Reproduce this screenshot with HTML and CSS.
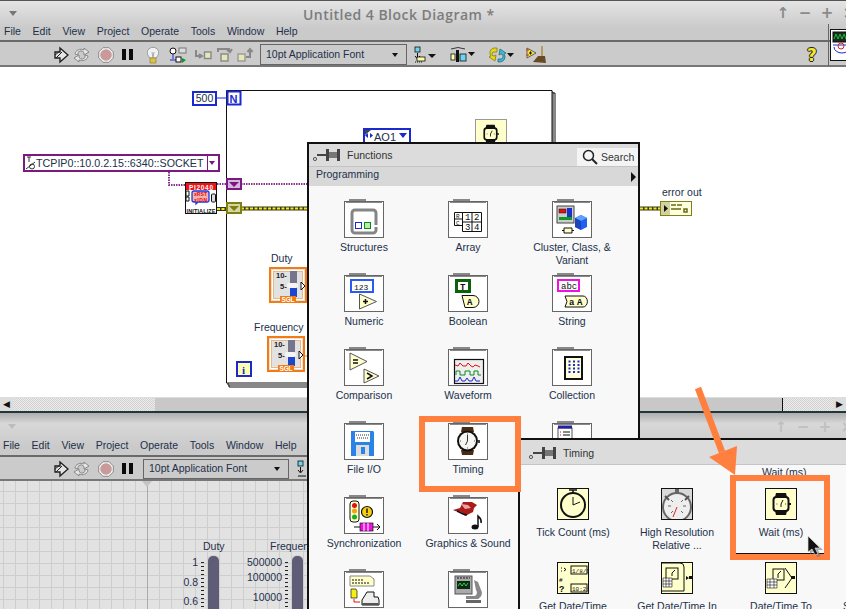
FILE: index.html
```html
<!DOCTYPE html>
<html lang="en">
<head>
  <meta charset="UTF-8">
  <meta name="viewport" content="width=device-width, initial-scale=1.0">
  <title>Untitled 4 Block Diagram</title>
  <link rel="stylesheet" href="styles.css">
</head>
<body>
  <!-- shared icons -->
  <svg class="defs" width="0" height="0">
    <symbol id="i-run" viewBox="0 0 15 18">
      <path d="M1 6h5V2l8 7-8 7v-4H1z" fill="#e4e4e4" stroke="#222" stroke-width="1.4"/>
      <path d="M1 9l5-4M2 12l6-6" stroke="#222"/>
    </symbol>
    <symbol id="i-cont" viewBox="0 0 17 16">
      <path d="M2 7a6 5 0 0 1 9-4V1l5 4-5 3V6a3 3 0 0 0-6 2zM15 9a6 5 0 0 1-9 4v2l-5-4 5-3v2a3 3 0 0 0 6-2z" fill="#e6e6e6" stroke="#888"/>
    </symbol>
    <symbol id="i-abort" viewBox="0 0 16 16">
      <path d="M5 .7h6L15.300 5v6L11 15.300H5L.7 11V5z" fill="#f2f2f2" stroke="#8a8a8a"/>
      <circle cx="8" cy="8" r="5.800" fill="#c99a9a"/>
    </symbol>
    <symbol id="i-pause" viewBox="0 0 11 11">
      <path d="M0 0h4v11H0zM7 0h4v11H7z" fill="#0a0a0a"/>
    </symbol>
    <symbol id="i-pin" viewBox="0 0 28 14">
      <circle cx="2" cy="11" r="1.600" fill="none" stroke="#555"/>
      <path d="M4 7h10" stroke="#444" stroke-width="2"/>
      <path d="M13 1h3v12h-3zM24 1h3v12h-3z" fill="#444"/>
      <path d="M16 4h8v6h-8z" fill="#777"/>
    </symbol>
    <symbol id="i-watch" viewBox="0 0 24 28">
      <path d="M6 0h11l1 5H5zM5 23h13l-1 5H6z" fill="#4a2c14"/>
      <circle cx="11.500" cy="14" r="10.500" fill="#111"/>
      <circle cx="11.500" cy="14" r="8.500" fill="#f6f6f2"/>
      <path d="M11.500 14V8M11.500 14l-2 4" stroke="#333"/>
      <path d="M11.500 6.500v1M11.500 20.500v1M4 14h1M18 14h1" stroke="#555"/>
      <rect x="22" y="13" width="2" height="3" fill="#444"/>
    </symbol>
    <symbol id="i-wait" viewBox="0 0 20 24">
      <path d="M5 1h10l1 4H4zM4 19h12l-1 4H5z" fill="#111"/>
      <rect x="2.500" y="5" width="15" height="14" rx="3" fill="#ffffcc" stroke="#111" stroke-width="2"/>
      <path d="M10 12l2-4M10 12v3M5.500 12h.8M14 12h.8" stroke="#111"/>
      <rect x="18" y="11" width="2" height="2" fill="#111"/>
    </symbol>
  </svg>

  <!-- block diagram window -->
  <section class="window block-window">
    <div class="chrome">
      <div class="titlebar">
        <span class="win-menu"></span>
        <span class="win-title">Untitled 4 Block Diagram *</span>
        <div class="win-buttons"><span>↑</span><span>−</span><span>+</span><span>×</span></div>
      </div>
      <nav class="menubar">
        <span>File</span><span>Edit</span><span>View</span><span>Project</span><span>Operate</span><span>Tools</span><span>Window</span><span>Help</span>
      </nav>
    </div>
    <div class="toolbar">
      <svg class="t-run" width="15" height="18"><use href="#i-run"/></svg>
      <svg class="t-cont" width="17" height="16"><use href="#i-cont"/></svg>
      <svg class="t-abort" width="16" height="16"><use href="#i-abort"/></svg>
      <svg class="t-pause" width="11" height="11"><use href="#i-pause"/></svg>
      <svg class="t-bulb" width="14" height="18" viewBox="0 0 14 18">
        <path d="M4 12C1 9 1 6 2 4a6 6 0 0 1 10 0c1 2 1 5-2 8z" fill="#f2f2f2" stroke="#999"/>
        <path d="M6 6l1 6M8 6l-1 6" stroke="#aaa"/>
        <rect x="4" y="12" width="6" height="5" fill="#d8c34a" stroke="#8a7a20" stroke-width=".6"/>
      </svg>
      <svg class="t-retain" width="18" height="18" viewBox="0 0 18 18">
        <circle cx="4" cy="5" r="3" fill="#fff" stroke="#111"/>
        <rect x="10" y="2" width="7" height="5" fill="#ddd" stroke="#777"/>
        <path d="M4 8v5M1 14h10" stroke="#1a2ad0"/>
        <rect x="7" y="11" width="5" height="5" fill="#fff" stroke="#111"/>
        <path d="M13 12l4 2-4 3z" fill="#0a9a20"/>
      </svg>
      <svg class="t-step" width="17" height="12" viewBox="0 0 17 12">
        <path d="M1 1v6h5M4 5l3 2-3 2" fill="none" stroke="#888" stroke-width="2"/>
        <rect x="9.500" y="3" width="6.500" height="6.500" fill="#e6e6b8" stroke="#888" stroke-width="1.400"/>
      </svg>
      <svg class="t-over" width="16" height="16" viewBox="0 0 16 16">
        <path d="M1 5V2h11v3M10 3l3 2 2-3" fill="none" stroke="#888" stroke-width="2"/>
        <rect x="4" y="7" width="7" height="7" fill="#e6e6b8" stroke="#888" stroke-width="1.400"/>
      </svg>
      <svg class="t-out" width="17" height="16" viewBox="0 0 17 16">
        <rect x="1" y="7" width="7" height="7" fill="#e6e6b8" stroke="#999" stroke-width="1.400"/>
        <path d="M9 10h4V3M10.500 5l2.500-3 2.500 3" fill="none" stroke="#888" stroke-width="2"/>
      </svg>
      <div class="font-select t-font"><span>10pt Application Font</span><i></i></div>
      <svg class="t-align" width="25" height="18" viewBox="0 0 25 18">
        <rect x="1" y="1" width="5" height="5" fill="#6fd3f0" stroke="#111" stroke-width=".8"/>
        <path d="M3.500 7v5M1 10l2.500 3L6 10" fill="none" stroke="#111"/>
        <path d="M1 16h8" stroke="#111" stroke-dasharray="1 1"/>
        <rect x="3" y="11" width="8" height="4" fill="#ffffa8" stroke="#111" stroke-width=".8"/>
        <path d="M14 8h8l-4 4z" fill="#111"/>
      </svg>
      <svg class="t-dist" width="25" height="18" viewBox="0 0 25 18">
        <path d="M1 3q7-3 14 0" fill="none" stroke="#111" stroke-width=".8"/>
        <rect x="1" y="8" width="4" height="6" fill="#ffffa8" stroke="#111" stroke-width=".8"/>
        <rect x="6" y="4" width="3" height="12" fill="#111"/>
        <rect x="10" y="8" width="6" height="7" fill="#6fd3f0" stroke="#111" stroke-width=".8"/>
        <path d="M18 6h7l-3.500 4z" fill="#111"/>
      </svg>
      <svg class="t-order" width="26" height="18" viewBox="0 0 26 18">
        <path d="M9 2H6a5 5 0 0 0-3 8l-2 1 6 4 1-6-2 1a2 2 0 0 1 0-4h3z" fill="#e7d616" stroke="#77700a" stroke-width=".7"/>
        <path d="M10 16h2a5 5 0 0 0 4-8l2-1-6-4-1 6 2-1a2 2 0 0 1-1 5h-2z" fill="#3fb7d0" stroke="#146478" stroke-width=".7"/>
        <path d="M19 7h7l-3.500 4z" fill="#111"/>
      </svg>
      <svg class="t-clean" width="20" height="18" viewBox="0 0 20 18">
        <path d="M1 2l9 5-9 5z" fill="#f4e13a" stroke="#444" stroke-width=".8"/>
        <path d="M0 4h3M0 9h3" stroke="#d22"/>
        <path d="M3 7h3M4.500 5.500v3" stroke="#111"/>
        <path d="M15 0h2v10h-2z" fill="#b59a62"/>
        <path d="M7 16l5-6h7l1 7z" fill="#6a4a24"/>
      </svg>
      <span class="help">?</span>
    </div>
    <svg class="corner-icon" width="16" height="32" viewBox="0 0 16 32">
      <rect x=".5" y=".5" width="30" height="31" fill="#fff" stroke="#111"/>
      <rect x="3" y="3" width="17" height="10" fill="#1d2a1f" stroke="#111"/>
      <path d="M4 10l2-5 2 5 2-5 2 5 2-5 2 5" fill="none" stroke="#18c030"/>
      <path d="M3 16h14" stroke="#1a2ad0"/>
      <circle cx="11" cy="17" r="3" fill="none" stroke="#d22"/>
      <path d="M4 18a8 6 0 0 0 16 0" fill="none" stroke="#1a2ad0"/>
    </svg>

    <div class="diagram">
      <svg class="wires" width="846" height="330" viewBox="0 67 846 330">
        <!-- stacked loop frame -->
        <path d="M229 93H555V387H229z" fill="#fff" stroke="#111"/>
        <path d="M228 92H553V385H228z" fill="#fff" stroke="#111"/>
        <path d="M226.500 90.500H552V383H226.500z" fill="#fff" stroke="#111"/>
        <path d="M217 98h10" stroke="#1a2ad0"/>
        <!-- wires -->
        <path d="M169 172v13h16M217 184h9M241 184h66" fill="none" stroke="#8a3090" stroke-width="2" stroke-dasharray="1.500 1"/>
        <path d="M217 209h9M241 208.500h66M640 208.500h20" stroke="#3a3a10" stroke-width="4"/>
        <path d="M217 209h9M241 208.500h66M640 208.500h20" stroke="#f5e62a" stroke-width="2" stroke-dasharray="3 1.500"/>
        <path d="M305 356h4" stroke="#f47a12"/>
        <!-- N terminal -->
        <rect x="227.500" y="91.500" width="13" height="13" fill="#fff" stroke="#1a2ad0" stroke-width="2"/>
        <text x="229.500" y="102.500" class="term-n">N</text>
        <!-- shift registers -->
        <rect x="227" y="179" width="14" height="10" fill="#d8b8dc" stroke="#7a1a80" stroke-width="2"/>
        <path d="M229 182h10l-5 5z" fill="#7a1a80"/>
        <rect x="227" y="203" width="14" height="10" fill="#d6d6a0" stroke="#7f7f12" stroke-width="2"/>
        <path d="M229 206h10l-5 5z" fill="#7f7f12"/>
        <!-- VISA init -->
        <rect x="185.500" y="182.500" width="31" height="31" fill="#fff" stroke="#111"/>
        <rect x="186" y="183" width="30" height="7" fill="#ee1212"/>
        <text x="189" y="189.500" class="ic-white" textLength="24">PI2040</text>
        <path d="M194 191h13a2 2 0 0 1 2 2v7a2 2 0 0 1-2 2h-9l-2 2v-2h-2a2 2 0 0 1-2-2v-7a2 2 0 0 1 2-2z" fill="#f4b0b0" stroke="#1a3ae0" stroke-width="1.300"/>
        <text x="194" y="196.200" class="ic-tiny" textLength="13">xRST</text>
        <text x="194" y="201.500" class="ic-tiny" textLength="13">xIDN</text>
        <path d="M186 191h3v5h-3zM186 197h3v4h-3z" fill="#fff" stroke="#111"/>
        <rect x="211.500" y="194" width="4" height="8" rx="1" fill="#ddd" stroke="#111"/>
        <text x="186.500" y="212.500" class="ic-init" textLength="29">INITIALIZE</text>
        <!-- wait -->
        <rect x="475.500" y="119.500" width="31" height="30" fill="#ffffcc" stroke="#999"/>
        <svg x="482" y="124" width="17" height="20"><use href="#i-wait"/></svg>
        <!-- controls -->
        <g class="slider" transform="translate(269 267)">
          <rect x="1" y="1" width="36" height="34" fill="#e2e2e2" stroke="#f47a12" stroke-width="2"/>
          <rect x="3.500" y="3.500" width="31" height="29" fill="none" stroke="#fff"/>
          <rect x="4.500" y="4.500" width="29" height="27" fill="none" stroke="#f9a860" stroke-width=".8"/>
          <text x="7" y="10.500" class="ic-dial">10-</text>
          <text x="11" y="21.500" class="ic-dial">5-</text>
          <rect x="21" y="4" width="7" height="26" fill="#77758e"/>
          <rect x="21" y="20" width="7" height="10" fill="#1d46cf"/>
          <rect x="18" y="16" width="11" height="5" rx="2" fill="#f4f4f4"/>
          <path d="M32 15l4 4-4 4z" fill="#fff" stroke="#111"/>
          <rect x="11" y="29" width="16" height="7" fill="#f47a12"/>
          <text x="12.500" y="35" class="ic-sgl" textLength="13">SGL</text>
        </g>
        <g class="slider" transform="translate(267 336)">
          <rect x="1" y="1" width="36" height="34" fill="#e2e2e2" stroke="#f47a12" stroke-width="2"/>
          <rect x="3.500" y="3.500" width="31" height="29" fill="none" stroke="#fff"/>
          <rect x="4.500" y="4.500" width="29" height="27" fill="none" stroke="#f9a860" stroke-width=".8"/>
          <text x="7" y="10.500" class="ic-dial">10-</text>
          <text x="11" y="21.500" class="ic-dial">5-</text>
          <rect x="21" y="4" width="7" height="26" fill="#77758e"/>
          <rect x="21" y="20" width="7" height="10" fill="#1d46cf"/>
          <rect x="18" y="16" width="11" height="5" rx="2" fill="#f4f4f4"/>
          <path d="M32 15l4 4-4 4z" fill="#fff" stroke="#111"/>
          <rect x="11" y="29" width="16" height="7" fill="#f47a12"/>
          <text x="12.500" y="35" class="ic-sgl" textLength="13">SGL</text>
        </g>
        <rect x="237" y="362" width="14" height="14" fill="#ffffb0" stroke="#1a2ad0" stroke-width="2"/>
        <text x="242" y="373.500" class="term-i">i</text>
        <!-- error out -->
        <rect x="660.500" y="201.500" width="31" height="14" fill="#fdfde0" stroke="#7f7f12"/>
        <rect x="661" y="202" width="9" height="13" fill="#d2d2a0"/>
        <path d="M664 205l4 3.500-4 3.500z" fill="#111"/>
        <path d="M671 205h5M677 205h5M671 209h10M684 209h3v3h-3z" stroke="#6b6b10" stroke-width="1.500" fill="none"/>
      </svg>
      <span class="num-const">500</span>
      <div class="visa-ctl">
        <svg width="11" height="14" viewBox="0 0 11 14"><path d="M2 1h4M4 1v5M1 13l9-7" stroke="#333" fill="none"/><circle cx="7" cy="10.500" r="2.500" fill="none" stroke="#333"/></svg>
        <span>TCPIP0::10.0.2.15::6340::SOCKET</span>
        <i></i>
      </div>
      <div class="ao-ctl">
        <svg class="ao-arrows" width="8" height="14" viewBox="0 0 8 14"><path d="M0 0h6L0 5z" fill="#444"/><path d="M3 8L0 5.500 3 3zM5 3l3 2.500L5 8z" fill="#1a2ad0"/></svg>
        <span>AO1</span><i></i>
      </div>
      <span class="lbl lbl-duty">Duty</span>
      <span class="lbl lbl-freq">Frequency</span>
      <span class="lbl lbl-err">error out</span>
    </div>

    <div class="hscroll">
      <span class="sb-btn">◀</span>
      <span class="sb-track sb-left"></span>
      <span class="sb-thumb"></span>
      <span class="sb-track sb-right"></span>
      <span class="sb-btn">▶</span>
    </div>
  </section>

  <!-- front panel window -->
  <section class="window front-window">
    <div class="chrome">
      <div class="titlebar titlebar-off">
        <span class="win-menu win-menu-off"></span>
        <div class="win-buttons"><span>↑</span><span>−</span><span>+</span><span>×</span></div>
      </div>
      <nav class="menubar">
        <span>File</span><span>Edit</span><span>View</span><span>Project</span><span>Operate</span><span>Tools</span><span>Window</span><span>Help</span>
      </nav>
    </div>
    <div class="toolbar">
      <svg class="t-run" width="15" height="18"><use href="#i-run"/></svg>
      <svg class="t-cont" width="17" height="16"><use href="#i-cont"/></svg>
      <svg class="t-abort" width="16" height="16"><use href="#i-abort"/></svg>
      <svg class="t-pause" width="11" height="11"><use href="#i-pause"/></svg>
      <div class="font-select t-font-front"><span>10pt Application Font</span><i></i></div>
      <svg class="t-align-front" width="12" height="18" viewBox="0 0 12 18">
        <rect x="1" y="1" width="5" height="5" fill="#6fd3f0" stroke="#111" stroke-width=".8"/>
        <path d="M3.500 7v5M1 10l2.500 3L6 10M1 16h8" fill="none" stroke="#111"/>
      </svg>
    </div>
    <div class="panel">
      <span class="panel-guide"></span>
      <span class="plbl plbl-duty">Duty</span>
      <span class="plbl plbl-freq">Frequency</span>
      <span class="track track-duty"></span>
      <span class="track track-freq"></span>
      <span class="scale s-1">1</span>
      <span class="scale s-08">0.8</span>
      <span class="scale s-06">0.6</span>
      <span class="scale f-1">500000</span>
      <span class="scale f-2">100000</span>
      <span class="scale f-3">10000</span>
      <span class="ticks ticks-duty"></span>
      <span class="ticks ticks-freq"></span>
    </div>
  </section>

  <!-- functions palette -->
  <section class="palette functions">
    <header class="pal-head">
      <svg width="28" height="14"><use href="#i-pin"/></svg>
      <span class="pal-name">Functions</span>
      <div class="pal-search">
        <svg width="16" height="16" viewBox="0 0 16 16"><circle cx="6.500" cy="6.500" r="5" fill="none" stroke="#222" stroke-width="1.500"/><path d="M10 10l5 5" stroke="#222" stroke-width="2"/></svg>
        <span>Search</span>
      </div>
    </header>
    <div class="pal-sub"><span>Programming</span><i></i></div>
    <div class="pal-grid">
      <div class="cell"><div class="tile">
        <svg width="38" height="35" viewBox="0 0 38 35"><path d="M31 25v3a3 3 0 0 1-3 3H10a3 3 0 0 1-3-3V11a3 3 0 0 1 3-3h18a3 3 0 0 1 3 3v12" fill="none" stroke="#858585" stroke-width="3"/><rect x="10.500" y="20.500" width="6" height="6" fill="#fff" stroke="#1a2ad0"/><rect x="19.500" y="20.500" width="6" height="6" fill="#b6f0a0" stroke="#0a8a20"/></svg>
      </div><span>Structures</span></div>
      <div class="cell"><div class="tile">
        <svg width="38" height="35" viewBox="0 0 38 35"><path d="M5.500 10.500h8v13h-8zM5.500 17h8M13.500 10.500h19v19h-19zM13.500 20h19M23 10.500v19" fill="#fff" stroke="#111"/><text x="7" y="16" class="ic-text">R</text><text x="7" y="22.500" class="ic-text">C</text><text x="16" y="18" class="ic-num">1</text><text x="25" y="18" class="ic-num">2</text><text x="16" y="28" class="ic-num">3</text><text x="25" y="28" class="ic-num">4</text></svg>
      </div><span>Array</span></div>
      <div class="cell"><div class="tile">
        <svg width="38" height="35" viewBox="0 0 38 35"><rect x="4" y="4" width="17" height="17" fill="#ccc" stroke="#444"/><rect x="6" y="7" width="7" height="4" fill="#e01010" stroke="#111" stroke-width=".5"/><rect x="14" y="6" width="5" height="9" fill="#1830d0"/><rect x="6" y="15" width="13" height="3" fill="#0a9a20"/><path d="M22 16l6-3 6 3v9l-6 3-6-3z" fill="#2060f0"/><path d="M22 16l6 3 6-3-6-3z" fill="#60a0ff"/><path d="M28 19v9l-6-3v-9z" fill="#1a46b8"/><path d="M11 26h8v5h-8z" fill="#ffffcc" stroke="#111"/><path d="M9 28.500h2M19 28.500h2" stroke="#111"/></svg>
      </div><span>Cluster, Class, &amp;<br>Variant</span></div>

      <div class="cell"><div class="tile">
        <svg width="38" height="35" viewBox="0 0 38 35"><rect x="6" y="4" width="22" height="12" fill="#fff" stroke="#2a5af0" stroke-width="2"/><text x="9" y="13.500" class="ic-num ic-mono">123</text><path d="M14.500 18l17 7.500-17 7.500z" fill="#ffffcc" stroke="#555"/><path d="M18 25.500h5M20.500 23v5" stroke="#111" stroke-width="1.500"/></svg>
      </div><span>Numeric</span></div>
      <div class="cell"><div class="tile">
        <svg width="38" height="35" viewBox="0 0 38 35"><rect x="6" y="3" width="16" height="14" fill="#0a620a"/><rect x="9" y="6" width="10" height="8" fill="#fff"/><text x="11" y="13.500" class="ic-num ic-bold">T</text><path d="M13 19.500h11a6 6 0 0 1 0 12H16z" fill="#ffffcc" stroke="#111"/><text x="18" y="29" class="ic-num ic-bold">A</text></svg>
      </div><span>Boolean</span></div>
      <div class="cell"><div class="tile">
        <svg width="38" height="35" viewBox="0 0 38 35"><rect x="5" y="4" width="21" height="11" fill="#fff" stroke="#f010e0" stroke-width="2"/><text x="8" y="13" class="ic-num">abc</text><path d="M12 20h18a4 5 0 0 1 0 11H12l2-5.500z" fill="#ffffcc" stroke="#111"/><text x="16" y="29" class="ic-num ic-bold">a</text><text x="24" y="29" class="ic-num ic-bold">A</text></svg>
      </div><span>String</span></div>

      <div class="cell"><div class="tile">
        <svg width="38" height="35" viewBox="0 0 38 35"><path d="M5 3l17 8.500L5 20z" fill="#ffffcc" stroke="#555"/><path d="M8 10h5M8 13h5" stroke="#111" stroke-width="1.500"/><path d="M19 19l15 7-15 7z" fill="#ffffcc" stroke="#555"/><path d="M22 23l5 3-5 3" fill="none" stroke="#111" stroke-width="1.500"/></svg>
      </div><span>Comparison</span></div>
      <div class="cell"><div class="tile">
        <svg width="38" height="35" viewBox="0 0 38 35"><rect x="5.500" y="9.500" width="29" height="24" fill="#eee" stroke="#111" stroke-width="1.200"/><path d="M6 15l3 1 2-3 3 3 3 0 2-3 3 3 2 1 2-2 3 1 2 1" fill="none" stroke="#e01010"/><path d="M7 25v-4h4v4h5v-4h5v4h4v-4h4v4h3" fill="none" stroke="#0a8a20"/><path d="M6 31h3l2-4 2 4h3l2-3 2 3h3l2-4 2 4h4" fill="none" stroke="#1a2ad0"/></svg>
      </div><span>Waveform</span></div>
      <div class="cell"><div class="tile">
        <svg width="38" height="35" viewBox="0 0 38 35"><rect x="12" y="7" width="17" height="22" fill="#ffffdc" stroke="#111" stroke-width="2"/><path d="M15.500 11.500h11M15.500 15h11M15.500 18.500h11M15.500 22h11" stroke="#1a2ad0" stroke-width="2" stroke-dasharray="2 2.500"/></svg>
      </div><span>Collection</span></div>

      <div class="cell"><div class="tile">
        <svg width="38" height="35" viewBox="0 0 38 35"><path d="M6 7h22l1 1v24H6z" fill="#2a84e8"/><rect x="10" y="8" width="15" height="10" fill="#fff"/><path d="M11 11h13M12 14h11" stroke="#333" stroke-dasharray="1 1"/><rect x="11" y="21" width="13" height="11" fill="#ddd"/><rect x="16" y="23" width="4" height="7" fill="#2a84e8"/></svg>
      </div><span>File I/O</span></div>
      <div class="cell"><div class="tile">
        <svg class="ic-timing" width="24" height="28"><use href="#i-watch"/></svg>
      </div><span>Timing</span></div>
      <div class="cell"><div class="tile">
        <svg width="38" height="35" viewBox="0 0 38 35"><rect x="5" y="4" width="14" height="13" fill="#fff" stroke="#555"/><rect x="5" y="1.500" width="14" height="3" fill="#2020a0"/><path d="M7 8h1M7 11h1" stroke="#e01010"/><path d="M10 8h7M10 11h7" stroke="#111"/></svg>
      </div></div>

      <div class="cell"><div class="tile">
        <svg width="38" height="35" viewBox="0 0 38 35"><rect x="5" y="3" width="9" height="21" rx="3" fill="#ffffcc" stroke="#111"/><circle cx="9.500" cy="7.500" r="2.500" fill="#e01010"/><circle cx="9.500" cy="13" r="2.500" fill="#f5a010"/><circle cx="9.500" cy="19" r="2.500" fill="#18b018"/><circle cx="22" cy="14" r="5.500" fill="#f5d010" stroke="#111" stroke-width="1.200"/><path d="M22 10.500v4.500M22 16v1.500" stroke="#111" stroke-width="1.400"/><path d="M9 29h6M28 29h6M32 26l3 3-3 3" fill="none" stroke="#111"/><rect x="15" y="25" width="13" height="8" fill="#f010e0" stroke="#111" stroke-width=".7"/><path d="M19 25v8M23 25v8" stroke="#fff"/></svg>
      </div><span>Synchronization</span></div>
      <div class="cell"><div class="tile">
        <svg width="38" height="35" viewBox="0 0 38 35"><path d="M4 12l7-2 3-6 9 0 5 3-3 3-1 4-4 2-4 2-4-4-6-1z" fill="#a81c1c"/><path d="M12 6l7 1 3 3-6 1z" fill="#f0a0a0"/><path d="M8 13l6 3 4 1" stroke="#111" fill="none" stroke-width="1.500"/><ellipse cx="26" cy="29" rx="3.500" ry="2.500" fill="#111"/><path d="M29 29V18c2 2 4 3 3 7" fill="none" stroke="#111" stroke-width="1.500"/></svg>
      </div><span>Graphics &amp; Sound</span></div>
      <div class="cell"></div>

      <div class="cell"><div class="tile">
        <svg width="38" height="35" viewBox="0 0 38 35"><path d="M5 4h20l4 3v7H5z" fill="#ffffcc" stroke="#888"/><path d="M7 8h12M7 11h18" stroke="#111" stroke-dasharray="2 1"/><path d="M6 17h5l1 2v7H6z" fill="#f5f010" stroke="#111" stroke-width=".7"/><path d="M9 27v3h6" fill="none" stroke="#e01010"/><path d="M22 20h7v5h4l1 3v5H17v-5z" fill="#eee" stroke="#111"/><path d="M17 33h17l-1-2H17z" fill="#555"/></svg>
      </div></div>
      <div class="cell"><div class="tile">
        <svg width="38" height="35" viewBox="0 0 38 35"><rect x="6" y="4" width="17" height="18" fill="#aaa" stroke="#555"/><path d="M8 6h13" stroke="#111" stroke-dasharray="2 1"/><rect x="8" y="9" width="13" height="8" fill="#0c2a14"/><path d="M9 14l2-3 2 3 2-3 2 3 2-3" fill="none" stroke="#30d040"/><path d="M25 8l4 2 3 8a6 6 0 0 1-6 9H17v-3h9a4 4 0 0 0 1-6z" fill="#888"/><path d="M17 28h15v3H17z" fill="#666"/></svg>
      </div></div>
    </div>
  </section>

  <!-- timing sub palette -->
  <section class="palette timing">
    <header class="pal-head pal-head-t">
      <svg width="28" height="14"><use href="#i-pin"/></svg>
      <span class="pal-name">Timing</span>
    </header>
    <div class="t-grid">
      <div class="cell"><div class="vi">
        <svg width="30" height="30" viewBox="0 0 30 30"><path d="M11 1h8M15 1v4" stroke="#111" stroke-width="1.500"/><circle cx="15" cy="16" r="12" fill="#ffffcc" stroke="#111" stroke-width="2"/><path d="M15 16V8M15 16l7-3" stroke="#111"/></svg>
      </div><span>Tick Count (ms)</span></div>
      <div class="cell"><div class="vi vi-grey">
        <svg width="30" height="30" viewBox="0 0 30 30"><path d="M13 0h4v5h-4z" fill="#666"/><circle cx="15" cy="18" r="14" fill="#eee" stroke="#666" stroke-width="2"/><path d="M3 7l4 4M27 7l-4 4" stroke="#555" stroke-width="2"/><path d="M15 18l-4 10" stroke="#d22"/><path d="M6 17h3M21 17h3M9 11l2 2M21 11l-2 2M9 24l2-2M21 24l-2-2" stroke="#666"/></svg>
      </div><span>High Resolution<br>Relative ...</span></div>
      <div class="cell"><div class="vi">
        <svg width="20" height="24" viewBox="0 0 20 24"><use href="#i-wait"/></svg>
      </div><span>Wait (ms)</span></div>
      <div class="cell"></div>

      <div class="cell"><div class="vi">
        <svg width="30" height="30" viewBox="0 0 30 30"><rect x="13" y="3" width="16" height="8" fill="#ffffcc" stroke="#111"/><text x="14" y="10" class="ic-text">1/8/9</text><rect x="13" y="21" width="16" height="8" fill="#ffffcc" stroke="#111"/><text x="14" y="28" class="ic-text">10:21</text><text x="1" y="19" class="ic-text ic-b">#</text><text x="1" y="29" class="ic-num ic-bold">?</text><path d="M3 5h1M3 8h1M6 5l2 1.500-2 1.500" stroke="#111" fill="none"/></svg>
      </div><span>Get Date/Time</span></div>
      <div class="cell"><div class="vi">
        <svg width="30" height="30" viewBox="0 0 30 30"><path d="M0 0h18a4 4 0 0 1 4 4v24H0" fill="#ffffcc" stroke="#111"/><rect x="4" y="5" width="12" height="11" fill="#ffffcc" stroke="#111"/><path d="M10 10l3-3M10 10v3" stroke="#111"/><path d="M1 15h9v9H1zM1 18h9M1 21h9M4 15v9M7 15v9" fill="#fff" stroke="#111" stroke-width=".6"/><path d="M24 13l3 2-3 2z" fill="#111"/><rect x="27" y="13" width="3" height="3" fill="#111"/></svg>
      </div><span>Get Date/Time In</span></div>
      <div class="cell"><div class="vi">
        <svg width="30" height="30" viewBox="0 0 30 30"><rect x="7" y="6" width="11" height="11" fill="#ffffcc" stroke="#111"/><path d="M12 11l3-3M12 11v4" stroke="#111"/><path d="M1 16h10v9H1zM1 19h10M1 22h10M4 16v9M8 16v9" fill="#fff" stroke="#111" stroke-width=".6"/><path d="M19 5l7 10-7 10" fill="none" stroke="#111"/><rect x="25" y="13" width="4" height="3" fill="#111"/></svg>
      </div><span>Date/Time To</span></div>
      <div class="cell cell-off"><span>S</span></div>
    </div>
    <span class="tip">Wait (ms)</span>
  </section>

  <!-- annotations -->
  <span class="mark mark-timing"></span>
  <span class="mark mark-wait"></span>
  <span class="wait-line"></span>
  <svg class="arrow" width="60" height="100" viewBox="690 380 60 100">
    <path d="M698 388l24 64" stroke="#ff7f3f" stroke-width="6.500"/>
    <path d="M737 446l-28 11 26 18z" fill="#ff7f3f"/>
  </svg>
  <svg class="cursor" width="16" height="22" viewBox="0 0 16 22">
    <path d="M2 2l1 17 4-3 3 6 4-1-3-6h5z" fill="#777" opacity=".6"/>
    <path d="M1 1v16l4-3 3 6 3-1-3-6h5z" fill="#111" stroke="#ddd" stroke-width=".7"/>
  </svg>
</body>
</html>
```

FILE: styles.css
```css
* {
  box-sizing: border-box;
}

body {
  margin: 0;
  width: 846px;
  height: 609px;
  position: relative;
  overflow: hidden;
  background: #333;
  font-family: "Liberation Sans", Arial, sans-serif;
  font-size: 10.5px;
  color: #22304a;
}

.defs {
  position: absolute;
}

.window {
  position: absolute;
  left: 0;
  width: 846px;
  display: flex;
  flex-direction: column;
  overflow: hidden;
}

.block-window {
  top: 0;
  height: 413px;
  border-bottom: 2px solid #20383c;
}

.front-window {
  top: 413px;
  height: 196px;
}

.chrome {
  background: linear-gradient(#e4e4e4, #cacaca 70%);
  border-bottom: 2px solid #6a6a6a;
  flex-shrink: 0;
}

.block-window .chrome {
  height: 42px;
  border-top: 1px solid #555;
}

.front-window .chrome {
  height: 44px;
  background: linear-gradient(#aeaeae, #d8d8d8 25%, #cacaca 80%);
}

.titlebar {
  height: 24px;
  display: flex;
  align-items: center;
  position: relative;
}

.titlebar-off {
  height: 27px;
}

.win-menu {
  width: 0;
  height: 0;
  margin-left: 9px;
  border-left: 4px solid transparent;
  border-right: 4px solid transparent;
  border-top: 5px solid #777;
}

.win-menu-off {
  margin-left: 8px;
  border-top-color: #bcbcbc;
}

.win-title {
  margin: 2px 0 0 286px;
  font-family: "Open Sans", sans-serif;
  font-weight: 600;
  font-size: 14px;
  letter-spacing: 0.47px;
  white-space: nowrap;
  color: #7c7c7c;
}

.win-buttons {
  position: absolute;
  left: 772px;
  top: 3px;
  display: flex;
  font-family: "DejaVu Sans", sans-serif;
  font-size: 15px;
  font-weight: bold;
  color: #8a8a8a;
}

.win-buttons span {
  width: 22px;
  text-align: center;
}

.titlebar-off .win-buttons {
  left: 770px;
  top: 5px;
  color: #c0c0c0;
}

.menubar {
  height: 15px;
  display: flex;
  align-items: center;
  gap: 11.7px;
  padding: 0 0 3px 4px;
}

.front-window .menubar {
  padding: 0 0 5px 3px;
}

.toolbar {
  height: 25px;
  display: flex;
  align-items: center;
  background: #cbcbcb;
  border-bottom: 2px solid #777;
  padding: 2px 0 0 54px;
  flex-shrink: 0;
}

.front-window .toolbar {
  height: 24px;
  padding-top: 1px;
}

.t-cont { margin-left: 4px; }
.t-abort { margin-left: 8px; }
.t-pause { margin-left: 8px; }
.t-bulb { margin-left: 13px; }
.t-retain { margin-left: 9px; }
.t-step { margin-left: 8px; }
.t-over { margin-left: 5px; }
.t-out { margin-left: 4px; }
.t-font { margin-left: 6px; width: 147px; }
.t-align { margin-left: 7px; }
.t-dist { margin-left: 11px; }
.t-order { margin-left: 13px; }
.t-clean { margin-left: 12px; }
.t-font-front { margin-left: 10px; width: 146px; }
.t-align-front { margin-left: 8px; }

.font-select {
  height: 21px;
  border: 1px solid #666;
  display: flex;
  align-items: center;
  justify-content: space-between;
  padding: 0 8px 2px 5px;
}

.front-window .font-select {
  height: 20px;
}

.font-select i {
  width: 0;
  height: 0;
  margin-top: 3px;
  border-left: 3.5px solid transparent;
  border-right: 3.5px solid transparent;
  border-top: 4px solid #111;
}

.help {
  margin-left: 261px;
  font-family: "DejaVu Sans", sans-serif;
  font-size: 17px;
  font-weight: bold;
  color: #f4e82a;
  text-shadow: 1px 0 #222, -1px 0 #222, 0 1px #222, 0 -1px #222;
}

.corner-icon {
  position: absolute;
  left: 830px;
  top: 29px;
}

.block-window::after {
  content: "";
  position: absolute;
  left: 828px;
  top: 24px;
  width: 1px;
  height: 42px;
  background: #666;
}

/* diagram canvas */
.diagram {
  position: relative;
  flex: 1;
  background: #fff;
  overflow: hidden;
}

.wires {
  position: absolute;
  left: 0;
  top: 0;
}

.num-const {
  position: absolute;
  left: 192px;
  top: 24px;
  width: 25px;
  height: 15px;
  border: 2px solid #1a2ad0;
  background: #fff;
  line-height: 11px;
  text-align: center;
}

.visa-ctl {
  position: absolute;
  left: 23px;
  top: 87px;
  width: 197px;
  height: 18px;
  border: 2px solid #7a1a80;
  background: #fff;
  display: flex;
  align-items: center;
  font-size: 10.7px;
  white-space: nowrap;
}

.visa-ctl i {
  position: absolute;
  right: 0;
  top: 0;
  width: 11px;
  height: 14px;
  background: #fff;
  border-left: 1px solid #7a1a80;
}

.visa-ctl i::after {
  content: "";
  position: absolute;
  left: 1px;
  top: 5px;
  border-left: 3.5px solid transparent;
  border-right: 3.5px solid transparent;
  border-top: 4px solid #7a1a80;
}

.ao-ctl {
  position: absolute;
  left: 363px;
  top: 61px;
  width: 48px;
  height: 16px;
  border: 2px solid #1a2ad0;
  border-bottom: 0;
  background: #fff;
  display: flex;
  align-items: center;
  padding-left: 9px;
  font-size: 11px;
}

.ao-ctl i {
  position: absolute;
  right: 2px;
  top: 3px;
  border-left: 4px solid transparent;
  border-right: 4px solid transparent;
  border-top: 5px solid #1a2ad0;
}

.ao-arrows {
  position: absolute;
  left: 0;
  top: 0;
}

.lbl {
  position: absolute;
  white-space: nowrap;
}

.lbl-duty { left: 271px; top: 185px; }
.lbl-freq { left: 254px; top: 254px; }
.lbl-err { left: 662px; top: 119px; }

.hscroll {
  height: 14px;
  display: flex;
  background: #c8c8c8;
  border-top: 1px solid #ddd;
  flex-shrink: 0;
}

.sb-btn {
  width: 13px;
  font-size: 9px;
  line-height: 13px;
  text-align: center;
  color: #111;
  background: #ddd;
}

.sb-track {
  background: repeating-conic-gradient(#cfcfcf 0 25%, #eee 0 50%) 0 0 / 2px 2px;
}

.sb-left { width: 142px; }
.sb-right { width: 51px; border-left: 1px solid #111; }
.sb-thumb { flex: 1; }

/* front panel */
.panel {
  position: relative;
  flex: 1;
  background-color: #e2e2e2;
  background-image:
    linear-gradient(#cdcdcd 1px, transparent 1px),
    linear-gradient(90deg, #cdcdcd 1px, transparent 1px);
  background-size: 12px 12px;
  background-position: 3px 10px;
}

.panel-guide {
  position: absolute;
  left: 147px;
  top: 0;
  bottom: 0;
  width: 1px;
  background: #aaa;
}

.panel-guide::before {
  content: "";
  position: absolute;
  left: -5px;
  top: 0;
  border-left: 5px solid transparent;
  border-right: 5px solid transparent;
  border-top: 6px solid #c4c4c4;
}

.plbl,
.scale {
  position: absolute;
  white-space: nowrap;
  font-size: 10.5px;
}

.plbl-duty { left: 203px; top: 59px; }
.plbl-freq { left: 270px; top: 59px; }

.track {
  position: absolute;
  top: 75px;
  bottom: -10px;
  width: 11px;
  border-radius: 5px 5px 0 0;
  background: #5e5c76;
  box-shadow: 0 0 1px 1px #cfcfcf;
}

.track-duty { left: 208px; }
.track-freq { left: 292px; }

.scale { text-align: right; }
.s-1 { right: 648px; top: 75px; }
.s-08 { right: 648px; top: 95px; }
.s-06 { right: 648px; top: 114px; }
.f-1 { right: 564px; top: 75px; }
.f-2 { right: 564px; top: 90px; }
.f-3 { right: 564px; top: 110px; }

.ticks {
  position: absolute;
  top: 81px;
  bottom: 0;
  width: 3px;
  background: repeating-linear-gradient(#222 0 1px, transparent 1px 4px);
}

.ticks-duty { left: 201px; }
.ticks-freq { left: 285px; }

/* palettes */
.palette {
  position: absolute;
  background: #f8f8f8;
  border: 2px solid #111;
  overflow: hidden;
}

.functions {
  left: 307px;
  top: 142px;
  width: 333px;
  height: 480px;
}

.timing {
  left: 518px;
  top: 438px;
  width: 340px;
  height: 190px;
}

.pal-head {
  height: 23px;
  display: flex;
  align-items: center;
  gap: 6px;
  padding-left: 4px;
  background: #dcdcdc;
  border-bottom: 1px solid #c4c4c4;
  position: relative;
}

.pal-head-t {
  height: 25px;
  padding: 1px 0 0 9px;
}

.pal-name {
  font-size: 10.5px;
  color: #333;
}

.pal-search {
  position: absolute;
  right: 0;
  top: 4px;
  width: 61px;
  height: 18px;
  background: #f4f4f4;
  display: flex;
  align-items: center;
  gap: 3px;
  padding-left: 5px;
  color: #333;
}

.pal-sub {
  height: 19px;
  background: #d8d8d8;
  display: flex;
  align-items: center;
  justify-content: space-between;
  padding: 0 2px 6px 7px;
}

.pal-sub i {
  margin-top: 6px;
  border-top: 5px solid transparent;
  border-bottom: 5px solid transparent;
  border-left: 5px solid #111;
}

.pal-grid {
  display: grid;
  grid-template-columns: repeat(3, 104px);
  grid-auto-rows: 74px;
  padding: 15px 0 0 3px;
}

.cell {
  display: flex;
  flex-direction: column;
  align-items: center;
  text-align: center;
  line-height: 13px;
  white-space: nowrap;
}

.tile {
  position: relative;
  width: 40px;
  height: 37px;
  margin-bottom: 3px;
  background: #fff;
  border: 1px solid #666;
  flex-shrink: 0;
}

.tile::before {
  content: "";
  position: absolute;
  left: 1px;
  top: -3px;
  width: 36px;
  height: 3px;
  border-bottom: 1px solid #888;
  background: linear-gradient(90deg, #888 0 17px, transparent 17px) 3px 0 / 100% 2px no-repeat;
}

.tile svg {
  display: block;
}

.ic-timing {
  margin: 3px 0 0 7px;
}

.t-grid {
  display: grid;
  grid-template-columns: repeat(4, 104px);
  grid-auto-rows: 74px;
  padding: 23px 0 0 1px;
}

.t-grid .cell {
  gap: 6px;
}

.vi {
  width: 32px;
  height: 32px;
  display: flex;
  align-items: center;
  justify-content: center;
  background: #ffffcc;
  border: 1px solid #111;
  flex-shrink: 0;
}

.vi-grey {
  background: #d8d8d8;
}

.t-grid .cell-off {
  padding: 38px 0 0 10px;
  align-items: flex-start;
}

.tip {
  position: absolute;
  left: 242px;
  top: 26px;
}

/* small text inside icons */
.ic-text {
  font: 6px "Liberation Mono", monospace;
  fill: #111;
}

.ic-dial {
  font: bold 7.5px "Liberation Sans", sans-serif;
  fill: #222;
}

.ic-sgl {
  font: bold 6.5px "Liberation Sans", sans-serif;
  fill: #fff;
}

.ic-white {
  font: bold 6.5px "Liberation Sans", sans-serif;
  fill: #fff;
}

.ic-tiny {
  font: bold 5px "Liberation Sans", sans-serif;
  fill: #e01010;
}

.ic-init {
  font: bold 5.5px "Liberation Sans", sans-serif;
  fill: #111;
}

.ic-num {
  font: 9px "Liberation Mono", monospace;
  fill: #111;
}

.ic-mono {
  font-size: 8px;
}

.ic-bold,
.ic-b {
  font-weight: bold;
}

.term-n {
  font: bold 11px "Liberation Sans", sans-serif;
  fill: #1a2ad0;
}

.term-i {
  font: bold 11px "Liberation Serif", serif;
  fill: #1a2ad0;
}

/* annotations */
.mark {
  position: absolute;
  border: 6px solid #ff7f3f;
}

.mark-timing {
  left: 419px;
  top: 416px;
  width: 102px;
  height: 76px;
}

.mark-wait {
  left: 730px;
  top: 475px;
  width: 100px;
  height: 85px;
}

.wait-line {
  position: absolute;
  left: 736px;
  top: 553px;
  width: 88px;
  height: 1px;
  background: #111;
}

.arrow {
  position: absolute;
  left: 690px;
  top: 380px;
}

.cursor {
  position: absolute;
  left: 807px;
  top: 535px;
}
```
